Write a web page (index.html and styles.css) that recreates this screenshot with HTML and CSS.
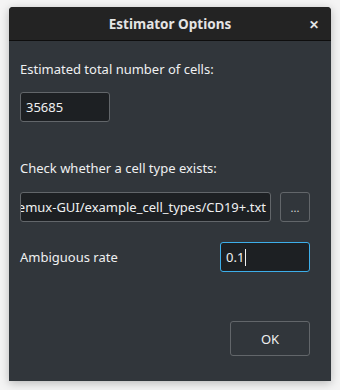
FILE: index.html
```html
<!DOCTYPE html>
<html lang="en">
<head>
  <meta charset="UTF-8">
  <title>Estimator Options</title>
  <link rel="stylesheet" href="styles.css">
</head>
<body>
  <div class="window">
    <!-- Barra de titulo -->
    <div class="titlebar">
      <span class="title">Estimator Options</span>
      <span class="close">&#x2715;</span>
    </div>

    <!-- Conteudo -->
    <div class="content">
      <div class="label first">Estimated total number of cells:</div>
      <div class="field short">35685</div>

      <div class="label second">Check whether a cell type exists:</div>
      <div class="row">
        <div class="field path"><span>/home/user/Demux-GUI/example_cell_types/CD19+.txt</span></div>
        <div class="browse">...</div>
      </div>

      <div class="row rate">
        <div class="label">Ambiguous rate</div>
        <div class="field short focus">0.1<span class="cursor"></span></div>
      </div>

      <div class="footer">
        <div class="ok">OK</div>
      </div>
    </div>
  </div>
</body>
</html>
```

FILE: styles.css
```css
body {
  margin: 0;
  background: #f4f4f4;
  font-family: 'Noto Sans', sans-serif;
  font-size: 13px;
  color: #eff0f1;
  height: 390px;
}

.window {
  margin: 7px 0 0 9px;
  width: 322px;
  height: 374px;
  background: #31363b;
  border-radius: 4px 4px 0 0;
  box-shadow: 0 2px 10px rgba(0,0,0,0.25);
  overflow: hidden;
  display: flex;
  flex-direction: column;
}

.titlebar {
  height: 33px;
  background: #232323;
  border-bottom: 1px solid #0e0e0e;
  display: flex;
  align-items: center;
  justify-content: center;
  position: relative;
}

.title {
  font-weight: bold;
  font-size: 13.5px;
  color: #e4e4e4;
}

.close {
  position: absolute;
  right: 12px;
  top: 9px;
  font-size: 12px;
  font-weight: bold;
  color: #e4e4e4;
}

.content {
  flex: 1;
  padding: 0 21px 0 11px;
  display: flex;
  flex-direction: column;
}

.label {
  color: #eff0f1;
  line-height: 18px;
}

.label.first {
  margin-top: 19px;
}

.label.second {
  margin-top: 37px;
}

.field {
  height: 28px;
  background: #1d2023;
  border: 1px solid #62666a;
  border-radius: 3px;
  display: flex;
  align-items: center;
  padding: 0 5px;
  box-sizing: content-box;
  white-space: nowrap;
  overflow: hidden;
}

.field.short {
  width: 78px;
  margin-top: 14px;
}

.row {
  display: flex;
  align-items: center;
  margin-top: 15px;
}

.field.path {
  flex: 1;
  justify-content: flex-end;
  padding: 0 4px;
}

.field.path span {
  flex-shrink: 0;
}

.browse {
  width: 28px;
  height: 28px;
  margin-left: 9px;
  border: 1px solid #62666a;
  border-radius: 3px;
  display: flex;
  align-items: center;
  justify-content: center;
  font-size: 11px;
  color: #d8d8d8;
}

.row.rate {
  margin-top: 20px;
  justify-content: space-between;
}

.row.rate .field {
  margin-top: 0;
  border-color: #3daee9;
}

.cursor {
  display: inline-block;
  width: 1px;
  height: 17px;
  background: #eff0f1;
  margin-left: 1px;
}

.footer {
  margin-top: 49px;
  display: flex;
  justify-content: flex-end;
}

.ok {
  width: 78px;
  height: 33px;
  border: 1px solid #62666a;
  border-radius: 3px;
  display: flex;
  align-items: center;
  justify-content: center;
  color: #eff0f1;
}
```
